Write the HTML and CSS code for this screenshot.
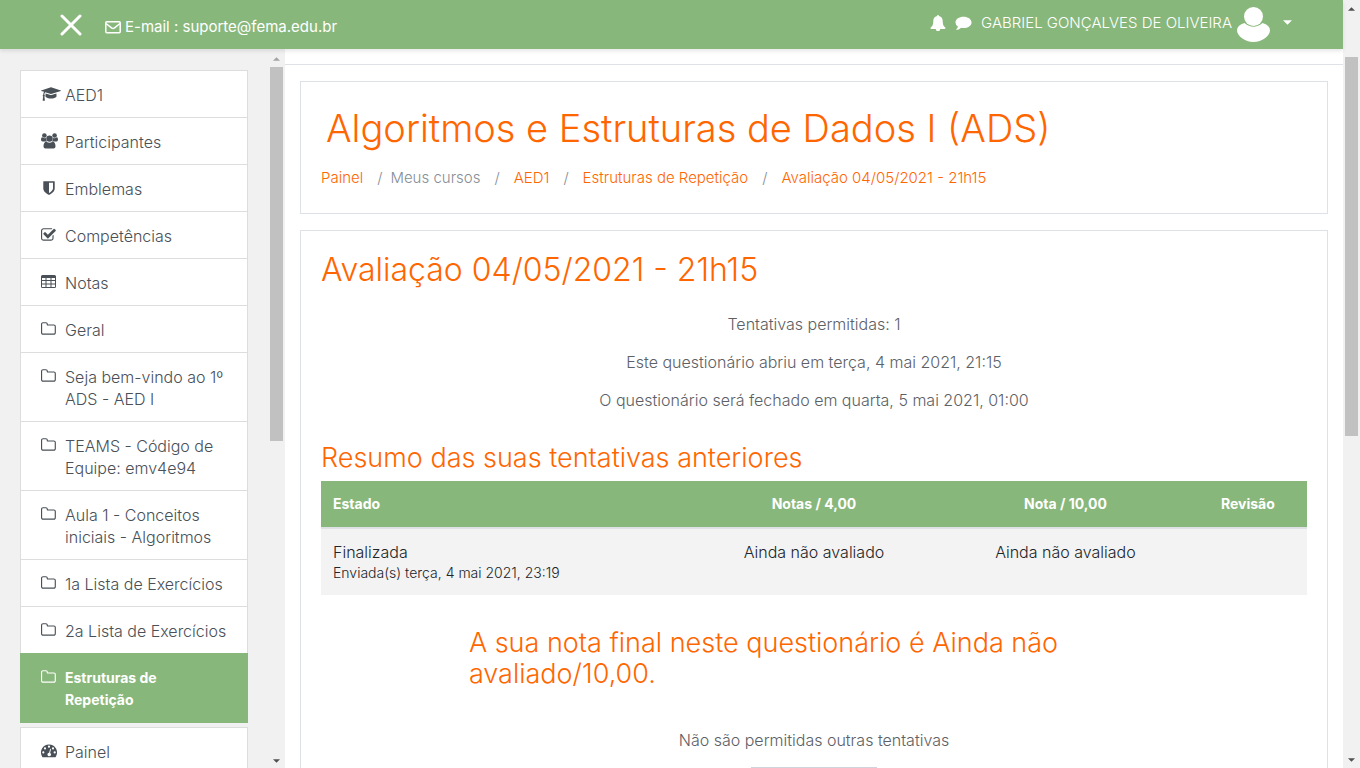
FILE: index.html
```html
<!DOCTYPE html>
<html lang="pt-br">
<head>
<meta charset="utf-8">
<title>Avaliação 04/05/2021 - 21h15</title>
<link rel="stylesheet" href="styles.css">
</head>
<body>
<svg class="sprite" aria-hidden="true">
  <symbol id="folder" viewBox="64 0 1792 1792"><path d="M1600 1312v-704q0-40-28-68t-68-28h-704q-40 0-68-28t-28-68v-64q0-40-28-68t-68-28h-320q-40 0-68 28t-28 68v960q0 40 28 68t68 28h1216q40 0 68-28t28-68zm128-704v704q0 92-66 158t-158 66h-1216q-92 0-158-66t-66-158v-960q0-92 66-158t158-66h320q92 0 158 66t66 158v32h672q92 0 158 66t66 158z"/></symbol>
  <symbol id="cap" viewBox="0 0 2304 1792"><path d="M1774 836l18 316q4 69-82 128t-235 93.500-323 34.500-323-34.500-235-93.500-82-128l18-316 574 181q22 7 48 7t48-7zm530-324q0 23-22 31l-1120 352q-4 1-10 1t-10-1l-652-206q-43 34-71 111.500t-34 178.500q63 36 63 109 0 69-58 107l58 433q2 14-8 25-9 11-24 11h-192q-15 0-24-11-10-11-8-25l58-433q-58-38-58-107 0-73 65-111 11-207 98-330l-333-104q-22-8-22-31t22-31l1120-352q4-1 10-1t10 1l1120 352q22 8 22 31z"/></symbol>
  <symbol id="shield" viewBox="0 0 1792 1792"><path d="M1344 960v-640h-448v1137q119-63 213-137 235-184 235-360zm192-768v768q0 86-33.500 170.500t-83 150-118 127.500-126.500 103-121 77.500-89.500 49.500-42.500 20q-12 6-26 6t-26-6q-16-7-42.500-20t-89.500-49.500-121-77.500-126.500-103-118-127.500-83-150-33.500-170.500v-768q0-26 19-45t45-19h1152q26 0 45 19t19 45z"/></symbol>
  <symbol id="check" viewBox="64 0 1792 1792"><path d="M1472 930v318q0 119-84.500 203.500t-203.500 84.500h-832q-119 0-203.500-84.500t-84.500-203.500v-832q0-119 84.500-203.500t203.500-84.500h832q63 0 117 25 15 7 18 23 3 17-9 29l-49 49q-10 10-23 10-3 0-9-2-23-6-45-6h-832q-66 0-113 47t-47 113v832q0 66 47 113t113 47h832q66 0 113-47t47-113v-254q0-13 9-22l64-64q10-10 23-10 6 0 12 3 20 8 20 29zm231-489l-814 814q-24 24-57 24t-57-24l-430-430q-24-24-24-57t24-57l110-110q24-24 57-24t57 24l263 263 647-647q24-24 57-24t57 24l110 110q24 24 24 57t-24 57z"/></symbol>
  <symbol id="users" viewBox="0 0 17 16"><circle cx="3.400" cy="2.500" r="2.300"/><circle cx="13.600" cy="2.500" r="2.300"/><path d="M0 6.500Q0 4.300 1.200 4.300q2 1.200 3.900.7Q5 7.300 6 8.600H1.500Q0 8.400 0 6.500zM17 6.500q0-2.200-1.200-2.200-2 1.200-3.900.7.100 2.300-.9 3.600h4.500q1.500-.2 1.500-2.100z"/><circle cx="8.500" cy="5.600" r="3.200"/><path d="M5.500 8.800q3 2 6 0 3 0 3 4.700 0 2-2 2h-8q-2 0-2-2 0-4.700 3-4.700z"/></symbol>
  <symbol id="table" viewBox="0 0 16 16"><path fill-rule="evenodd" d="M1.500 1H13.500A1.500 1.500 0 0 1 15 2.500V12.500A1.500 1.500 0 0 1 13.500 14H1.500A1.500 1.500 0 0 1 0 12.500V2.500A1.500 1.500 0 0 1 1.500 1zM1 4v2h3.500V4zm4.500 0v2h4V4zm5 0v2H14V4zM1 7v2.500h3.500V7zm4.500 0v2.500h4V7zm5 0v2.500H14V7zM1 10.500V13h3.500v-2.500zm4.500 0V13h4v-2.500zm5 0V13H14v-2.500z"/></symbol>
  <symbol id="gauge" viewBox="0 0 16 16"><path fill-rule="evenodd" d="M8 1.500a8 8 0 0 0-6.800 12.200q.3.500.8.500h12q.5 0 .8-.5A8 8 0 0 0 8 1.500zM2.300 8.300a1.100 1.100 0 1 1 0 2.200 1.100 1.100 0 0 1 0-2.200zM4 4.300a1.100 1.100 0 1 1 0 2.200 1.100 1.100 0 0 1 0-2.200zM8 2.600a1.100 1.100 0 1 1 0 2.200 1.100 1.100 0 0 1 0-2.200zM12 4.300a1.100 1.100 0 1 1 0 2.200 1.100 1.100 0 0 1 0-2.200zM13.700 8.300a1.100 1.100 0 1 1 0 2.200 1.100 1.100 0 0 1 0-2.200zM9.200 5.800l.8.200-.9 3.900a1.800 1.800 0 1 1-1-.2z"/></symbol>
  <symbol id="bell" viewBox="0 0 16 16"><path d="M8 0q1 0 1 1.100C11.500 1.600 12.700 3.500 12.700 6c0 3.500.8 5.300 2.800 6.700 0 .8-.4 1.200-1.100 1.200H10.200a2.200 2.200 0 0 1-4.400 0H1.600c-.7 0-1.100-.4-1.100-1.200C2.500 11.300 3.300 9.500 3.300 6 3.300 3.500 4.500 1.600 7 1.100 7 0 8 0 8 0z"/></symbol>
  <symbol id="comment" viewBox="0 0 18 16"><path d="M9 1.500c4.700 0 8.500 2.600 8.500 5.900S13.700 13.300 9 13.300q-1.200 0-2.400-.2-2 1.900-5 2.200-.5-.3-.1-.8 1.300-1.200 1.600-2.800Q.5 9.900.5 7.400C.5 4.100 4.300 1.500 9 1.500z"/></symbol>
  <symbol id="mail" viewBox="0 0 16 16"><g fill="none" stroke="currentColor" stroke-width="1.500" stroke-linejoin="round"><rect x=".8" y="2.700" width="14.400" height="11" rx="1"/><path d="M1 4.500l5.500 4.400q1.500 1.100 3 0L15 4.500"/></g></symbol>
  <symbol id="up" viewBox="0 0 8 4"><path d="M0 4l4-4 4 4z"/></symbol>
  <symbol id="down" viewBox="0 0 8 4"><path d="M0 0l4 4 4-4z"/></symbol>
</svg>
<div class="page">
  <header class="topbar">
    <button class="close" aria-label="Fechar menu"><svg viewBox="0 0 22 22"><path d="M2 2l18 18M20 2L2 20"/></svg></button>
    <a class="mail" href="#"><svg class="icon"><use href="#mail"/></svg>E-mail : suporte@fema.edu.br</a>
    <nav class="user">
      <button class="tool" aria-label="Notificações"><svg class="icon"><use href="#bell"/></svg></button>
      <button class="tool" aria-label="Mensagens"><svg class="icon wide"><use href="#comment"/></svg></button>
      <button class="account"><span class="name">GABRIEL GONÇALVES DE OLIVEIRA</span>
        <svg class="avatar" viewBox="0 0 33 35"><circle cx="16.500" cy="9.500" r="9.500"/><path d="M7.500 16q9 7.500 18 0 7.500 2 7.500 7.500C33 29 25 35 16.500 35S0 29 0 23.500Q0 18 7.500 16z"/></svg>
        <svg class="caret"><use href="#down"/></svg></button>
    </nav>
  </header>
  <div class="body">
    <aside class="sidebar">
      <nav class="menus">
        <ul class="menu">
          <li><a href="#"><svg class="icon cap"><use href="#cap"/></svg><span>AED1</span></a></li>
          <li><a href="#"><svg class="icon wide"><use href="#users"/></svg><span>Participantes</span></a></li>
          <li><a href="#"><svg class="icon"><use href="#shield"/></svg><span>Emblemas</span></a></li>
          <li><a href="#"><svg class="icon"><use href="#check"/></svg><span>Competências</span></a></li>
          <li><a href="#"><svg class="icon"><use href="#table"/></svg><span>Notas</span></a></li>
          <li><a href="#"><svg class="icon"><use href="#folder"/></svg><span>Geral</span></a></li>
          <li><a href="#"><svg class="icon"><use href="#folder"/></svg><span>Seja bem-vindo ao 1º<br>ADS - AED I</span></a></li>
          <li><a href="#"><svg class="icon"><use href="#folder"/></svg><span>TEAMS - Código de<br>Equipe: emv4e94</span></a></li>
          <li><a href="#"><svg class="icon"><use href="#folder"/></svg><span>Aula 1 - Conceitos<br>iniciais - Algoritmos</span></a></li>
          <li><a href="#"><svg class="icon"><use href="#folder"/></svg><span>1a Lista de Exercícios</span></a></li>
          <li><a href="#"><svg class="icon"><use href="#folder"/></svg><span>2a Lista de Exercícios</span></a></li>
          <li class="active"><a href="#"><svg class="icon"><use href="#folder"/></svg><span>Estruturas de<br>Repetição</span></a></li>
        </ul>
        <ul class="menu">
          <li><a href="#"><svg class="icon"><use href="#gauge"/></svg><span>Painel</span></a></li>
        </ul>
      </nav>
      <div class="scroll side"><svg class="arrow dim"><use href="#up"/></svg><div class="track"><div class="thumb"></div></div><svg class="arrow"><use href="#down"/></svg></div>
    </aside>
    <main class="content">
      <section class="card course">
        <h1>Algoritmos e Estruturas de Dados I (ADS)</h1>
        <ol class="crumbs">
          <li><a href="#">Painel</a></li><li class="near">Meus cursos</li><li><a href="#">AED1</a></li><li><a href="#">Estruturas de Repetição</a></li><li><a href="#">Avaliação 04/05/2021 - 21h15</a></li>
        </ol>
      </section>
      <section class="card quiz">
        <h2>Avaliação 04/05/2021 - 21h15</h2>
        <div class="info">
          <p>Tentativas permitidas: 1</p>
          <p>Este questionário abriu em terça, 4 mai 2021, 21:15</p>
          <p>O questionário será fechado em quarta, 5 mai 2021, 01:00</p>
        </div>
        <h3>Resumo das suas tentativas anteriores</h3>
        <table class="attempts">
          <colgroup><col class="c-state"><col class="c-marks"><col class="c-grade"><col></colgroup>
          <thead><tr><th scope="col">Estado</th><th scope="col">Notas / 4,00</th><th scope="col">Nota / 10,00</th><th scope="col">Revisão</th></tr></thead>
          <tbody><tr><td>Finalizada<small>Enviada(s) terça, 4 mai 2021, 23:19</small></td><td>Ainda não avaliado</td><td>Ainda não avaliado</td><td></td></tr></tbody>
        </table>
        <div class="feedback"><h3>A sua nota final neste questionário é Ainda não avaliado/10,00.</h3></div>
        <p class="nomore">Não são permitidas outras tentativas</p>
        <button class="back" aria-label="Voltar ao curso"></button>
      </section>
    </main>
  </div>
</div>
<div class="scroll"><svg class="arrow"><use href="#up"/></svg><div class="track offset"><div class="thumb"></div></div><svg class="arrow"><use href="#down"/></svg></div>
</body>
</html>
```
FILE: styles.css
```css
* { box-sizing: border-box; }
body {
  margin: 0;
  height: 100vh;
  display: flex;
  overflow: hidden;
  font: 300 15px/22px Inter, "Open Sans", sans-serif;
  color: #5c6166;
  background: #fff;
}
h1, h2, h3, p, ul, ol { margin: 0; padding: 0; font-weight: 300; }
ul, ol { list-style: none; }
a { color: #ff6600; text-decoration: none; }
button { font: inherit; color: inherit; background: none; border: 0; padding: 0; }
.sprite { display: none; }
svg { fill: currentColor; flex: none; }
.icon { width: 16px; height: 16px; }
.icon.wide { width: 17px; }
.icon.cap { width: 20px; }

.page { flex: 1; min-width: 0; display: flex; flex-direction: column; }
.topbar {
  height: 49px;
  flex: none;
  display: flex;
  align-items: center;
  padding: 0 51px 0 60px;
  color: #fff;
  background: #88b77b;
  box-shadow: 0 2px 4px rgba(0, 0, 0, .1);
  z-index: 1;
}
.close svg { display: block; width: 22px; height: 22px; fill: none; stroke: #fff; stroke-width: 3px; stroke-linecap: round; }
.mail { display: flex; align-items: center; gap: 4px; margin: 5px 0 0 23px; color: #fff; font-weight: 400; }
.user { display: flex; align-items: center; gap: 9px; margin-left: auto; }
.tool { padding-bottom: 3px; }
.tool svg { display: block; }
.account { display: flex; align-items: center; gap: 5px; }
.name { padding-bottom: 4px; }
.avatar { width: 33px; height: 35px; }
.caret { width: 9px; height: 5px; margin: 0 0 5px 8px; }

.body { flex: 1; min-height: 0; display: flex; }
.sidebar { width: 285px; flex: none; display: flex; background: #f1f1f1; }
.menus { flex: 1; padding: 21px 20px 0; overflow: hidden; }
.menu { margin-bottom: 4px; border: 1px solid #dcdddd; border-bottom: 0; background: #fff; font-size: 16px; }
.menu li + li { border-top: 1px solid #dcdddd; }
.menu a { display: flex; gap: 8px; padding: 13px 20px 11px; color: #495057; white-space: nowrap; }
.menu .icon { margin-top: 2px; }
.menu .icon.wide { margin-right: -1px; }
.menu .icon.cap { margin-right: -4px; }
.menu .active { margin: 0 -1px; border-color: #88b77b; background: #88b77b; }
.menu .active a { padding: 13px 21px 12px; color: #fff; font-size: 14px; font-weight: 700; }

.scroll { width: 17px; flex: none; display: flex; flex-direction: column; align-items: center; padding: 7px 0 6px; background: #f1f1f1; color: #505050; }
.scroll .arrow { width: 7px; height: 4px; }
.scroll .dim { color: #a3a3a3; }
.scroll .track { flex: 1; width: 13px; margin: 6px 0; }
.scroll .thumb { height: 54.500%; background: #c1c1c1; }
.scroll.side { padding-top: 8px; padding-bottom: 5px; }
.scroll .offset { padding-top: 40px; }

.content { flex: 1; min-width: 0; overflow: hidden; margin-top: 15px; padding: 16px 15px 0; border-top: 1px solid #dee2e6; }
.card { padding: 20px; margin-bottom: 16px; border: 1px solid #dee2e6; }
.course { padding: 23px 20px 24px; }
h1 { padding-left: 5px; font-size: 38px; line-height: 46px; color: #ff6600; }
h2, h3 { color: #ff6600; }
.crumbs { display: flex; margin-top: 16px; color: #868e96; }
.crumbs li + li::before { content: "/"; padding: 0 14px; }
.crumbs .near::before { padding-right: 8px; }
.quiz { display: flex; flex-direction: column; font-size: 16px; }
h2 { font-size: 32px; line-height: 38px; }
h3 { font-size: 27px; line-height: 31px; }
.info { margin: 24px 0 15px; text-align: center; }
.info p { margin-bottom: 16px; }
.attempts { width: 100%; margin-top: 8px; border-collapse: collapse; table-layout: fixed; color: #212529; background: #f3f3f3; }
.attempts th, .attempts td { padding: 12px; text-align: center; vertical-align: top; }
.attempts th { height: 45px; border-bottom: 2px solid #dee2e6; color: #fff; background: #88b77b; font-size: 14px; font-weight: 700; }
.attempts th:first-child, .attempts td:first-child { text-align: left; }
.attempts small { display: block; font-size: 14px; line-height: 20px; }
.c-state { width: 37%; }
.c-marks { width: 26%; }
.c-grade { width: 25%; }
.feedback { width: 70%; margin: 32px auto 0; }
.nomore { margin-top: 40px; text-align: center; }
.back { align-self: center; width: 126px; height: 36px; margin-top: 16px; border: 1px solid #ced4da; background: #fff; }
```
